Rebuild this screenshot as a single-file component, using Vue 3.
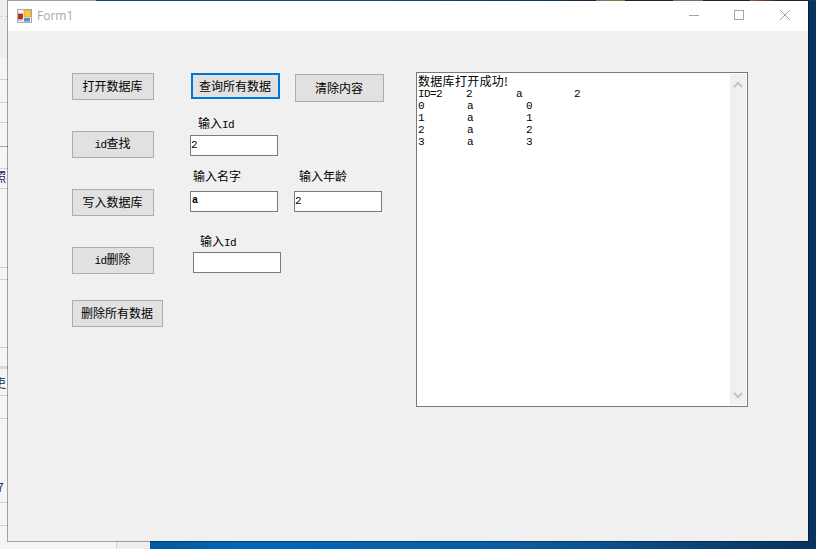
<script setup>
const edgeLines = [
  { top: 79, color: '#cfcfe0', h: 1 }, { top: 102, color: '#cfcfe0', h: 1 }, { top: 122, color: '#cfcfe0', h: 1 },
  { top: 146, color: '#a9a9a9', h: 1 }, { top: 168, color: '#cfcfe0', h: 1 }, { top: 188, color: '#cfcfe0', h: 1 },
  { top: 267, color: '#cfcfe0', h: 1 }, { top: 279, color: '#cfcfe0', h: 1 }, { top: 347, color: '#cfcfe0', h: 1 },
  { top: 366, color: '#d8d8d8', h: 3 }, { top: 395, color: '#cfcfe0', h: 1 }, { top: 418, color: '#cfcfe0', h: 1 },
  { top: 502, color: '#cfcfe0', h: 1 }, { top: 525, color: '#cfcfe0', h: 1 }
]
const edgeGlyphs = [
  { top: 170, left: -6, text: '照' },
  { top: 376, left: -6, text: '吏' },
  { top: 480, left: -3, text: '7' }
]
const rows = [
  { cells: [['ID=2', 48], ['2', 50], ['a', 58], ['2', 12]] },
  { cells: [['0', 49], ['a', 59], ['0', 12]] },
  { cells: [['1', 49], ['a', 59], ['1', 12]] },
  { cells: [['2', 49], ['a', 59], ['2', 12]] },
  { cells: [['3', 49], ['a', 59], ['3', 12]] }
]
</script>

<template>
  <div class="desk">
    <div class="top-strip"></div>
    <div class="left-panel">
      <div class="left-head"><span class="dots">· ·</span></div>
      <div v-for="l in edgeLines" :key="l.top" class="edge-line" :style="{ top: l.top + 'px', height: l.h + 'px', background: l.color }"></div>
      <span v-for="g in edgeGlyphs" :key="g.top" class="edge-glyph" :style="{ top: g.top + 'px', left: g.left + 'px' }">{{ g.text }}</span>
    </div>
    <div class="bottom-left"></div>
    <div class="bottom-mid"></div>

    <div class="window">
      <div class="titlebar">
        <svg class="app-icon" width="15" height="14" viewBox="0 0 15 14">
          <rect x="0.5" y="0.5" width="14" height="13" fill="#f4f4f4" stroke="#a9a9a9" />
          <rect x="7" y="1" width="7" height="7" fill="#f6c945" stroke="#c79a2a" stroke-width="0.6" />
          <rect x="1.5" y="5" width="4" height="5" fill="#d9251c" stroke="#8e1b16" stroke-width="0.6" />
          <rect x="7" y="9" width="6" height="3.5" fill="#4a90e0" />
          <line x1="1" y1="11.5" x2="5.5" y2="11.5" stroke="#c8c8c8" />
        </svg>
        <span class="title">Form1</span>
        <div class="caption">
          <svg width="102" height="16" viewBox="0 0 102 16">
            <line x1="0" y1="8.5" x2="10" y2="8.5" stroke="#a3a3a3" />
            <rect x="45.5" y="3.5" width="9" height="9" fill="none" stroke="#a3a3a3" />
            <path d="M91 3 L101 13 M101 3 L91 13" stroke="#a3a3a3" fill="none" />
          </svg>
        </div>
      </div>

      <div class="client">
        <div class="controls">
          <div class="row row-1">
            <button class="btn btn-std">打开数据库</button>
            <button class="btn btn-default">查询所有数据</button>
            <button class="btn btn-clear">清除内容</button>
          </div>

          <div class="row row-2">
            <button class="btn btn-std"><span class="lat">id</span>查找</button>
            <div class="field">
              <label class="cap">输入<span class="lat">Id</span></label>
              <input class="txt" readonly value="2" />
            </div>
          </div>

          <div class="row row-3">
            <button class="btn btn-std">写入数据库</button>
            <div class="field f-name">
              <label class="cap">输入名字</label>
              <input class="txt" readonly value="a" />
            </div>
            <div class="field f-age">
              <label class="cap">输入年龄</label>
              <input class="txt" readonly value="2" />
            </div>
          </div>

          <div class="row row-4">
            <button class="btn btn-std"><span class="lat">id</span>删除</button>
            <div class="field">
              <label class="cap">输入<span class="lat">Id</span></label>
              <input class="txt" readonly value="" />
            </div>
          </div>

          <button class="btn btn-wide">删除所有数据</button>
        </div>

        <div class="output">
          <div class="log">
            <div class="log-head">数据库打开成功!</div>
            <div v-for="(r, i) in rows" :key="i" class="log-row">
              <span v-for="(c, j) in r.cells" :key="j" class="log-cell" :style="{ width: c[1] + 'px' }">{{ c[0] }}</span>
            </div>
          </div>
          <div class="scroll">
            <svg width="10" height="7" viewBox="0 0 10 7"><path d="M1 6 L5 2 L9 6" fill="none" stroke="#c2c2c2" stroke-width="2" /></svg>
            <svg width="10" height="7" viewBox="0 0 10 7"><path d="M1 1 L5 5 L9 1" fill="none" stroke="#c2c2c2" stroke-width="2" /></svg>
          </div>
        </div>
      </div>
    </div>
  </div>
</template>

<style>
html, body { margin: 0; padding: 0; overflow: hidden; }
</style>

<style scoped>
.desk {
  position: relative;
  width: 816px;
  height: 549px;
  overflow: hidden;
  background: linear-gradient(90deg, #00599f 150px, #0068bb 250px, #0a5c9f 520px, #0b3a6a 760px, #08335f 816px);
}
.top-strip {
  position: absolute;
  left: 0;
  top: 0;
  width: 816px;
  height: 1px;
  background: linear-gradient(90deg, #f0f0f0 96px, #1f6a9c 96px, #1f74a8 360px, #1d4f78 560px, #1d3a56 596px, #c9b27a 596px, #c9b27a 625px, #1d3a56 625px, #1d3a56 673px, #a8b090 673px, #a8b090 703px, #1d3a56 703px, #1d3a56 750px, #c0a070 750px, #a04040 770px, #1d3a56 780px);
}
.left-panel {
  position: absolute;
  left: 0;
  top: 0;
  width: 8px;
  height: 549px;
  overflow: hidden;
  background: #f5f5f5;
}
.left-head {
  height: 58px;
  background: #eeeef2;
}
.dots {
  display: block;
  padding-top: 13px;
  font: 8px/8px "Liberation Sans", sans-serif;
  color: #8a8a8a;
  white-space: pre;
}
.edge-line {
  position: absolute;
  left: 0;
  width: 8px;
}
.edge-glyph {
  position: absolute;
  font: 12px/14px "Noto Sans CJK SC", sans-serif;
  color: #1a2a50;
}
.bottom-left {
  position: absolute;
  left: 0;
  top: 541px;
  width: 116px;
  height: 8px;
  background: #f5f5f5;
  border-right: 1px solid #cfcfe0;
}
.bottom-mid {
  position: absolute;
  left: 117px;
  top: 541px;
  width: 33px;
  height: 8px;
  background: #eeeef2;
}
.window {
  position: absolute;
  left: 7px;
  top: 0;
  width: 802px;
  height: 542px;
  box-sizing: border-box;
  border: 1px solid rgba(0, 0, 0, 0.34);
  background-clip: padding-box;
  display: flex;
  flex-direction: column;
  font-family: "Noto Sans CJK SC", sans-serif;
}
.titlebar {
  height: 30px;
  flex: none;
  background: #fff;
  display: flex;
  align-items: center;
  padding: 0 17px 0 9px;
}
.app-icon {
  flex: none;
  margin-bottom: 1px;
}
.title {
  margin-left: 5px;
  font: 12px/16px "Open Sans", sans-serif;
  color: #a8a8a8;
}
.caption {
  margin-left: auto;
  height: 16px;
  margin-bottom: 2px;
  display: flex;
}
.client {
  flex: 1;
  background: #f0f0f0;
  padding: 41px 0 0 64px;
  display: flex;
  align-items: flex-start;
}
.controls {
  width: 344px;
  flex: none;
  padding-top: 1px;
  display: flex;
  flex-direction: column;
  align-items: flex-start;
}
.row {
  display: flex;
  align-items: flex-start;
}
.btn {
  box-sizing: border-box;
  margin: 0;
  padding: 0 1px 1px 0;
  border: 1px solid #adadad;
  background: #e1e1e1;
  color: #000;
  font: 12px/14px "Noto Sans CJK SC", sans-serif;
  text-align: center;
}
.lat {
  font-family: "Liberation Mono", monospace;
  font-size: 11px;
  letter-spacing: -0.6px;
  line-height: 14px;
}
.btn-std {
  width: 82px;
  height: 27px;
}
.btn-default {
  width: 89px;
  height: 26px;
  margin-left: 37px;
  border: 2px solid #0078d7;
}
.btn-clear {
  width: 89px;
  height: 28px;
  margin: 1px 0 0 15px;
}
.btn-wide {
  width: 91px;
  height: 27px;
  margin-top: 26px;
}
.row-1 { height: 29px; }
.row-2 { margin-top: 14px; }
.row-2 > .btn { margin-top: 15px; }
.row-3 { margin-top: 11px; }
.row-3 > .btn { margin-top: 20px; }
.row-4 { margin-top: 18px; }
.row-4 > .btn { margin-top: 13px; }
.field {
  display: flex;
  flex-direction: column;
  align-items: flex-start;
  margin-left: 36px;
}
.cap {
  height: 14px;
  font-size: 12px;
  line-height: 14px;
  color: #000;
  padding-left: 8px;
  margin-bottom: 5px;
}
.txt {
  box-sizing: border-box;
  width: 88px;
  height: 21px;
  border: 1px solid #7a7a7a;
  background: #fff;
  padding: 0 0 2px 0;
  margin: 0;
  outline: none;
  color: #000;
  font: 11px/17px "Liberation Mono", monospace;
}
.f-name .cap { padding-left: 3px; margin-bottom: 8px; }
.f-name .txt { font-size: 10px; font-weight: 700; padding-left: 1px; }
.f-age { margin-left: 16px; }
.f-age .cap { padding-left: 5px; margin-bottom: 8px; }
.row-4 .field { margin-left: 39px; }
.row-4 .cap { padding-left: 7px; margin-bottom: 4px; }
.output {
  box-sizing: border-box;
  width: 332px;
  height: 335px;
  border: 1px solid #7a7a7a;
  background: #fff;
  display: flex;
  padding: 1px;
}
.log {
  flex: 1;
  color: #000;
}
.log-head {
  font: 12px/14px "Noto Sans CJK SC", sans-serif;
  letter-spacing: 0.3px;
}
.log-row {
  display: flex;
  height: 12px;
  font: 11px/12px "Liberation Mono", monospace;
  letter-spacing: -0.6px;
}
.log-cell {
  flex: none;
}
.scroll {
  width: 16px;
  background: #f0f0f0;
  display: flex;
  flex-direction: column;
  align-items: center;
  justify-content: space-between;
  padding: 7px 0 6px;
  box-sizing: border-box;
}
</style>
